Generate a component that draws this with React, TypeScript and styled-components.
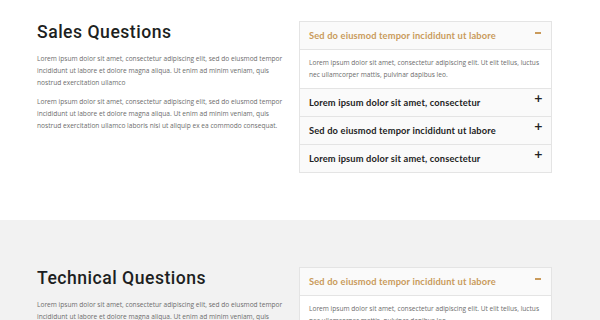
import styled, { createGlobalStyle } from "styled-components"

const GlobalStyle = createGlobalStyle`
  html, body {
    margin: 0;
    padding: 0;
    background: #ffffff;
  }
  body {
    font-family: "Open Sans", "Liberation Sans", sans-serif;
  }
`

const COLORS = {
  gold: "#c99a5b",
  heading: "#1d1f22",
  text: "#6d6d6d",
  border: "#e4e4e4",
  headerBg: "#fafafa",
  gray: "#f2f2f2",
}

const Section = styled.section<{ $gray?: boolean; $top: number }>`
  background: ${({ $gray }) => ($gray ? COLORS.gray : "#ffffff")};
  padding: ${({ $top }) => $top}px 0 0 37px;
  height: ${({ $gray }) => ($gray ? "auto" : "199px")};
  min-height: ${({ $gray }) => ($gray ? "53px" : "0")};
`

const Columns = styled.div`
  display: grid;
  grid-template-columns: 246px 253px;
  column-gap: 16px;
  align-items: start;
`

const Intro = styled.div`
  padding-top: 1px;
`

const Title = styled.h2`
  margin: 0 0 11px;
  font-family: "Roboto", "Liberation Sans", sans-serif;
  font-weight: 500;
  font-size: 17.6px;
  line-height: 20px;
  letter-spacing: 0.5px;
  color: ${COLORS.heading};
`

const Para = styled.p`
  margin: 0 0 7px;
  font-size: 6.6px;
  line-height: 12px;
  color: ${COLORS.text};
`

const Accordion = styled.div`
  border: 1px solid ${COLORS.border};
  background: #ffffff;
`

const Row = styled.div`
  display: flex;
  justify-content: space-between;
  align-items: flex-start;
  height: 27px;
  padding: 0 8px 0 9px;
  background: ${COLORS.headerBg};
  border-top: 1px solid ${COLORS.border};
  &:first-child {
    border-top: none;
  }
`

const RowTitle = styled.span<{ $open?: boolean }>`
  font-family: "Lato", "Liberation Sans", sans-serif;
  font-weight: 700;
  font-size: 9.3px;
  line-height: 27px;
  letter-spacing: 0.15px;
  color: ${({ $open }) => ($open ? COLORS.gold : "#232323")};
`

const Plus = styled.span`
  font-family: "DejaVu Sans", sans-serif;
  font-weight: 700;
  font-size: 11px;
  line-height: 20px;
  color: #232323;
`

const Minus = styled.span`
  display: block;
  width: 6px;
  height: 2px;
  margin: 10px 2px 0 0;
  background: ${COLORS.gold};
`

const Body = styled.div`
  padding: 7px 9px 7px;
  border-top: 1px solid ${COLORS.border};
  font-size: 6.6px;
  line-height: 12px;
  color: ${COLORS.text};
`

const LONG =
  "Lorem ipsum dolor sit amet, consectetur adipiscing elit, sed do eiusmod tempor incididunt ut labore et dolore magna aliqua. Ut enim ad minim veniam, quis nostrud exercitation ullamco"

const FaqBlock = ({ title, gray, top }: { title: string; gray?: boolean; top: number }) => (
  <Section $gray={gray} $top={top}>
    <Columns>
      <Intro>
        <Title>{title}</Title>
        <Para>{LONG}</Para>
        <Para>{LONG} laboris nisi ut aliquip ex ea commodo consequat.</Para>
      </Intro>
      <Accordion>
        <Row>
          <RowTitle $open>Sed do eiusmod tempor incididunt ut labore</RowTitle>
          <Minus />
        </Row>
        <Body>
          Lorem ipsum dolor sit amet, consectetur adipiscing elit. Ut elit tellus, luctus nec
          ullamcorper mattis, pulvinar dapibus leo.
        </Body>
        <Row>
          <RowTitle>Lorem ipsum dolor sit amet, consectetur</RowTitle>
          <Plus>+</Plus>
        </Row>
        <Row>
          <RowTitle>Sed do eiusmod tempor incididunt ut labore</RowTitle>
          <Plus>+</Plus>
        </Row>
        <Row>
          <RowTitle>Lorem ipsum dolor sit amet, consectetur</RowTitle>
          <Plus>+</Plus>
        </Row>
      </Accordion>
    </Columns>
  </Section>
)

const App = () => (
  <>
    <GlobalStyle />
    <FaqBlock title="Sales Questions" top={21} />
    <FaqBlock title="Technical Questions" gray top={47} />
  </>
)

export default App
